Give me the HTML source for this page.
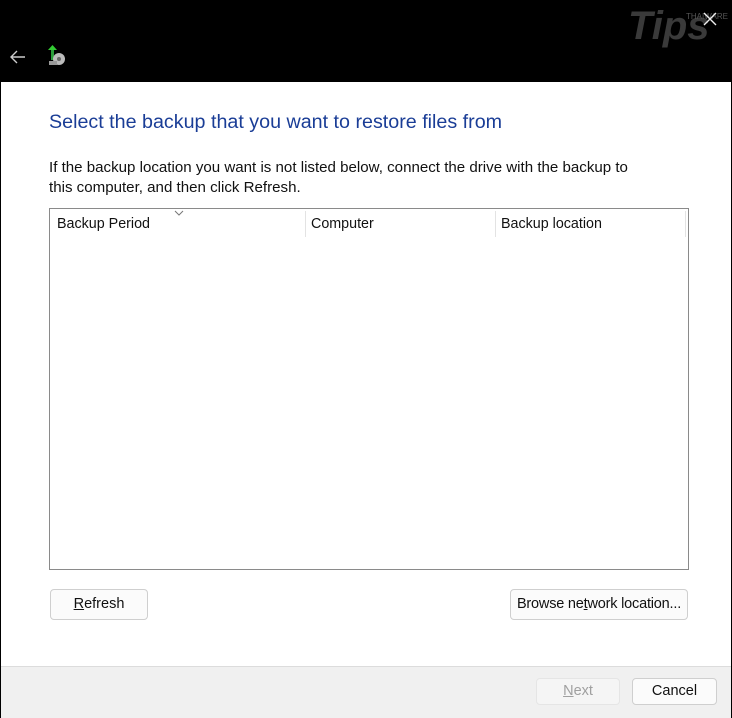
<!DOCTYPE html>
<html><head><style>
body{margin:0;width:732px;height:718px;background:#000;position:relative;overflow:hidden;font-family:"Liberation Sans",sans-serif;}
.hdr{position:absolute;left:0;top:0;width:732px;height:82px;background:#000;}
.main{position:absolute;left:1px;top:82px;width:730px;height:584px;background:#fff;}
.foot{position:absolute;left:1px;top:666px;width:730px;height:51px;background:#f0f0f0;border-top:1px solid #dcdcdc;}
.t{position:absolute;white-space:nowrap;}
.btn{position:absolute;background:#fbfbfb;border:1px solid #cfcfcf;border-radius:4px;font-size:14px;color:#111;text-align:center;box-sizing:border-box;}
</style></head><body>
<div class="hdr">
<svg style="position:absolute;left:9px;top:49px" width="18" height="16"><path d="M16 8H2M8 2L2 8l6 6" stroke="#ccc" stroke-width="1.4" fill="none"/></svg>
<svg style="position:absolute;left:47px;top:45px" width="20" height="22"><rect x="4" y="3" width="3" height="12" fill="#2a9d3a"/><path d="M1 5l4.5-5L10 5z" fill="#3c3"/><circle cx="12" cy="14" r="6" fill="#bbb"/><circle cx="12" cy="14" r="2" fill="#666"/><rect x="2" y="16" width="8" height="4" fill="#999"/></svg>
<div class="t" style="left:628px;top:4px;font-size:40px;font-weight:bold;font-style:italic;color:#3a3a3a">Tips</div>
<div class="t" style="left:686px;top:12px;font-size:8px;color:#555">THAIWARE</div>
<svg style="position:absolute;left:703px;top:12px" width="14" height="14"><path d="M1 1l12 12M13 1L1 13" stroke="#eee" stroke-width="1.4"/></svg>
</div>
<div class="main">
<div class="t" style="left:48px;top:29px;font-size:19.7px;color:#1a3d96">Select the backup that you want to restore files from</div>
<div class="t" style="left:48px;top:76px;font-size:15.1px;color:#111;line-height:20px">If the backup location you want is not listed below, connect the drive with the backup to<br>this computer, and then click Refresh.</div>
<div style="position:absolute;left:48px;top:126px;width:640px;height:362px;border:1px solid #8a8a8a;box-sizing:border-box;">
<div class="t" style="left:7px;top:7px;font-size:14.3px;color:#111">Backup Period</div>
<div class="t" style="left:261px;top:7px;font-size:14.3px;color:#111">Computer</div>
<div class="t" style="left:451px;top:7px;font-size:14.3px;color:#111">Backup location</div>
<div style="position:absolute;left:255px;top:2px;width:1px;height:26px;background:#e3e3e3"></div>
<div style="position:absolute;left:445px;top:2px;width:1px;height:26px;background:#e3e3e3"></div>
<div style="position:absolute;left:635px;top:2px;width:1px;height:26px;background:#e3e3e3"></div>
<svg style="position:absolute;left:124px;top:1px" width="10" height="6"><path d="M1 1l4 4 4-4" stroke="#777" fill="none"/></svg>
</div>
<div class="btn" style="left:49px;top:507px;width:98px;height:31px;line-height:29px;font-size:14.5px"><u>R</u>efresh</div>
<div class="btn" style="left:509px;top:507px;width:178px;height:31px;line-height:29px;font-size:14.5px;letter-spacing:-0.2px">Browse ne<u>t</u>work location...</div>
</div>
<div class="foot">
<div class="btn" style="left:535px;top:11px;width:84px;height:27px;line-height:25px;color:#a0a0a0;background:#f5f5f5;border-color:#e5e5e5;font-size:14.5px"><u>N</u>ext</div>
<div class="btn" style="left:631px;top:11px;width:85px;height:27px;line-height:25px;font-size:14.5px">Cancel</div>
</div>
</body></html>
